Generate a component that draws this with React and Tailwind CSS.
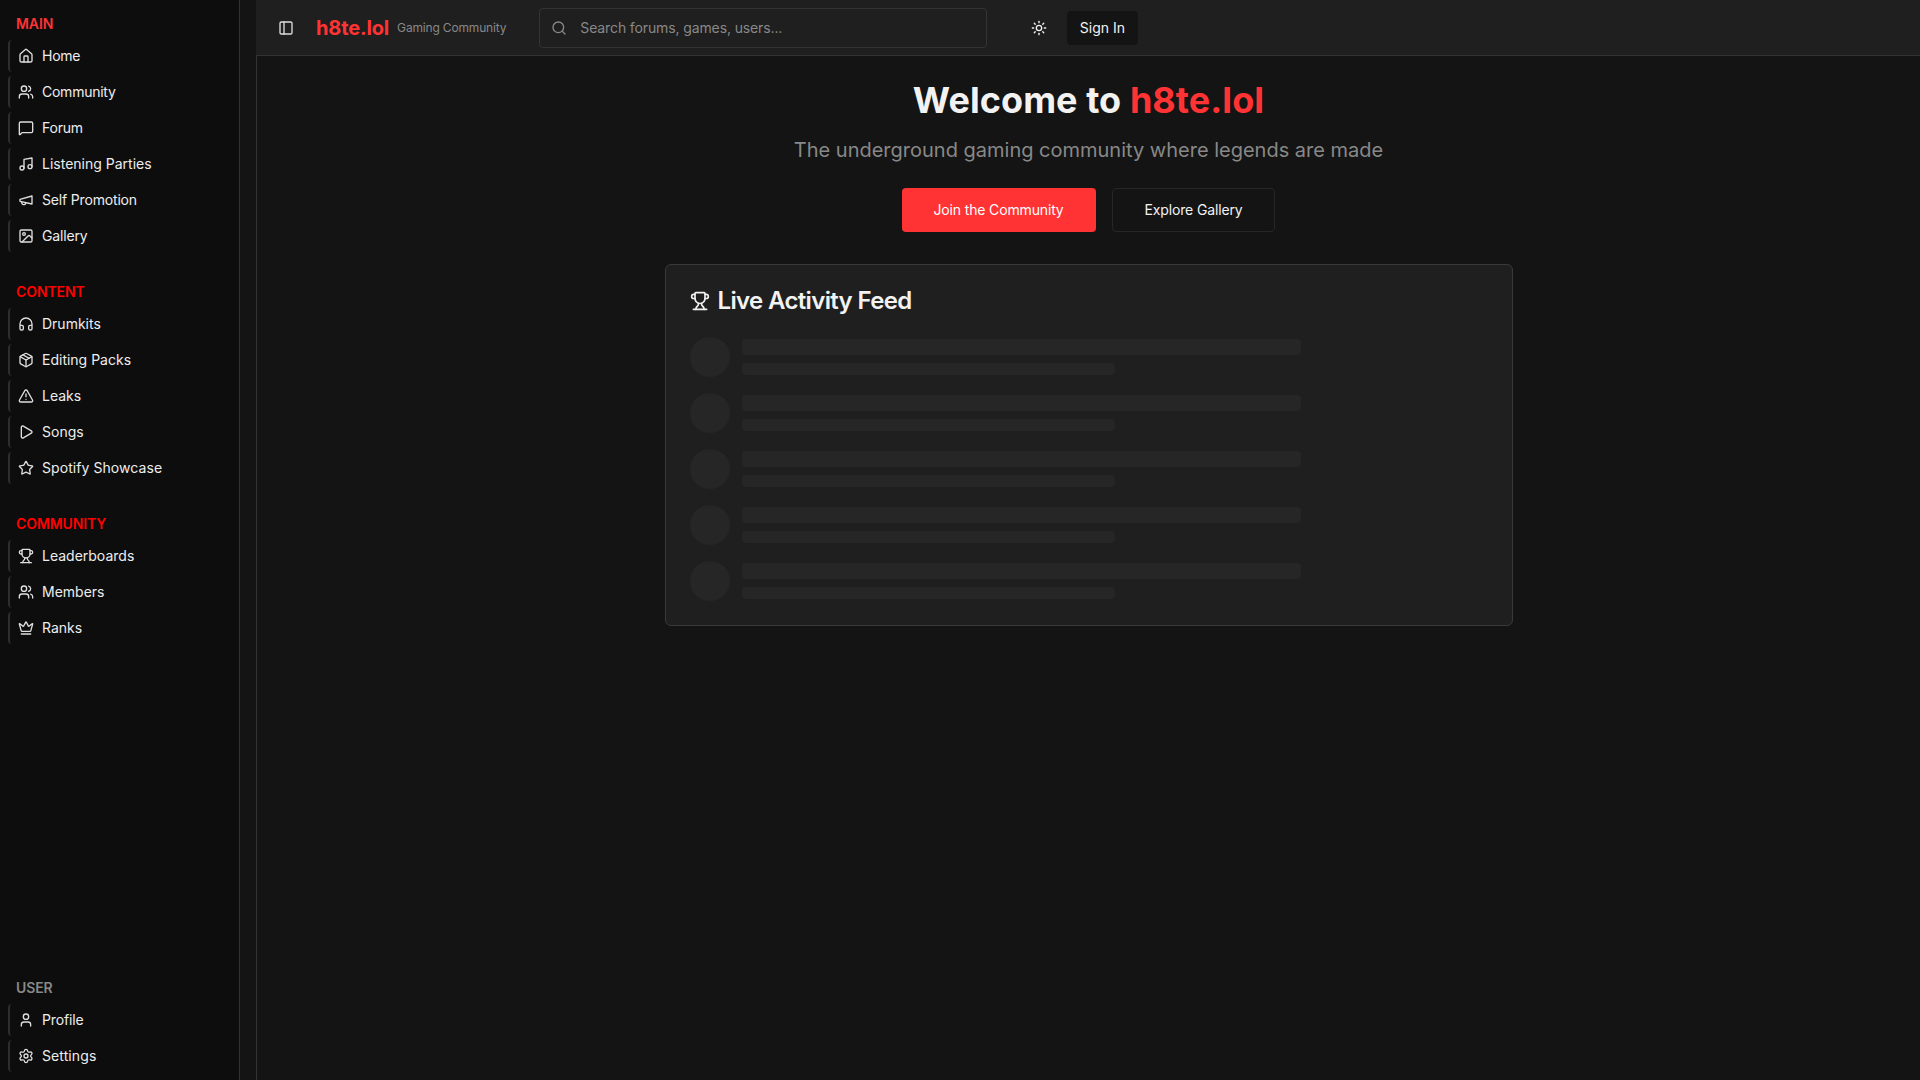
import React from "react";
import {
  House, Users, MessageSquare, Music, Image, Headphones, Package,
  TriangleAlert, Play, Star, Trophy, Crown, User, Settings, PanelLeft, Search, Sun,
} from "lucide-react";

function Megaphone({ className }) {
  return (
    <svg className={className} xmlns="http://www.w3.org/2000/svg" viewBox="0 0 24 24" fill="none" stroke="currentColor" strokeWidth="2" strokeLinecap="round" strokeLinejoin="round">
      <path d="m3 11 18-5v12L3 14v-3z" />
      <path d="M11.6 16.8a3 3 0 1 1-5.8-1.6" />
    </svg>
  );
}

const groups = [
  { label: "MAIN", color: "text-[#ff3333]", items: [
    ["Home", House, "tracking-[-0.25px]"], ["Community", Users, "tracking-[-0.25px]"], ["Forum", MessageSquare, "tracking-[-0.2px]"],
    ["Listening Parties", Music], ["Self Promotion", Megaphone, "tracking-[-0.17px]"], ["Gallery", Image, "tracking-[-0.15px]"],
  ]},
  { label: "CONTENT", color: "text-[#ff0000]", items: [
    ["Drumkits", Headphones], ["Editing Packs", Package], ["Leaks", TriangleAlert],
    ["Songs", Play], ["Spotify Showcase", Star, "tracking-[0.07px]"],
  ]},
  { label: "COMMUNITY", color: "text-[#ff0000]", items: [
    ["Leaderboards", Trophy], ["Members", Users], ["Ranks", Crown],
  ]},
];

function Group({ label, color, items }) {
  return (
    <div className="p-2">
      <div className={`h-8 px-2 flex items-center text-sm font-semibold tracking-[-0.1px] ${color}`}>{label}</div>
      <ul className="flex flex-col gap-1">
        {items.map(([name, Icon, track]) => (
          <li key={name} className="h-8 flex items-center gap-2 pl-2 border-l-2 border-[#2e2e2e] rounded-[4px] text-sm text-[#ededed]">
            <Icon className="w-4 h-4 shrink-0 text-[#dedede]" />
            <span className={track}>{name}</span>
          </li>
        ))}
      </ul>
    </div>
  );
}

function SkeletonRow() {
  return (
    <div className="flex items-center gap-3">
      <div className="w-10 h-10 shrink-0 rounded-full bg-[#262626]" />
      <div className="flex-1 flex flex-col gap-2">
        <div className="h-4 w-3/4 rounded bg-[#262626]" />
        <div className="h-3 w-1/2 rounded bg-[#262626]" />
      </div>
    </div>
  );
}

export default function App() {
  return (
    <div className="flex h-screen overflow-hidden bg-[#141414] font-[Inter,sans-serif] text-[#f2f2f2]">
      <aside className="w-[240px] shrink-0 flex flex-col justify-between bg-[#0d0d0d] border-r border-[#333333]">
        <div className="flex flex-col gap-2">
          {groups.map((g) => <Group key={g.label} {...g} />)}
        </div>
        <Group
          label="USER"
          color="text-[#888888]"
          items={[["Profile", User, "tracking-[-0.15px]"], ["Settings", Settings, "tracking-[0.1px]"]]}
        />
      </aside>

      <div className="flex-1 ml-4 flex flex-col min-w-0">
        <header className="h-14 shrink-0 flex items-center px-4 gap-4 bg-[#1f1f1f] border-b border-[#333333]">
          <button className="w-7 h-7 flex items-center justify-center text-[#dedede]">
            <PanelLeft className="w-4 h-4" />
          </button>
          <div className="flex items-center gap-2">
            <span className="text-xl font-bold tracking-[-0.15px] text-[#ff3333]">h8te.lol</span>
            <span className="text-xs tracking-[-0.17px] text-[#888888]">Gaming Community</span>
          </div>
          <div className="ml-[17px] w-[448px] h-10 flex items-center gap-[13px] pl-[11px] rounded-[4px] border border-[#333333] bg-[#1f1f1f] text-sm text-[#888888]">
            <Search className="w-4 h-4" />
            <span className="tracking-[-0.12px]">Search forums, games, users...</span>
          </div>
          <div className="ml-4 flex items-center gap-2">
            <button className="w-10 h-10 flex items-center justify-center text-[#f2f2f2]">
              <Sun className="w-4 h-4" />
            </button>
            <button className="h-[34px] px-[12.5px] rounded-[4px] bg-[#141414] text-sm font-normal text-[#f2f2f2]">Sign In</button>
          </div>
        </header>

        <main className="flex-1 border-l border-[#333333] p-6">
          <div className="mx-auto w-[848px] flex flex-col items-center">
            <h1 className="text-4xl font-bold tracking-[0.07px] text-[#f2f2f2]">
              Welcome to <span className="text-[#ff3333]">h8te.lol</span>
            </h1>
            <p className="mt-4 text-xl text-[#888888]">The underground gaming community where legends are made</p>
            <div className="mt-6 flex gap-4">
              <button className="h-11 px-8 rounded-[4px] bg-[#ff3333] text-sm font-normal tracking-[-0.15px] text-white">Join the Community</button>
              <button className="h-11 px-8 rounded-[4px] bg-[#141414] border border-[#262626] text-sm font-normal tracking-[-0.15px] text-[#f2f2f2]">Explore Gallery</button>
            </div>
            <section className="mt-8 w-full rounded-md border border-[#3a3a3a] bg-[#1f1f1f] p-6">
              <h2 className="flex items-center gap-2 text-2xl leading-none font-semibold tracking-[-0.65px] text-[#f2f2f2]">
                <Trophy className="w-5 h-5" />
                Live Activity Feed
              </h2>
              <div className="mt-6 flex flex-col gap-4">
                <SkeletonRow />
                <SkeletonRow />
                <SkeletonRow />
                <SkeletonRow />
                <SkeletonRow />
              </div>
            </section>
          </div>
        </main>
      </div>
    </div>
  );
}
